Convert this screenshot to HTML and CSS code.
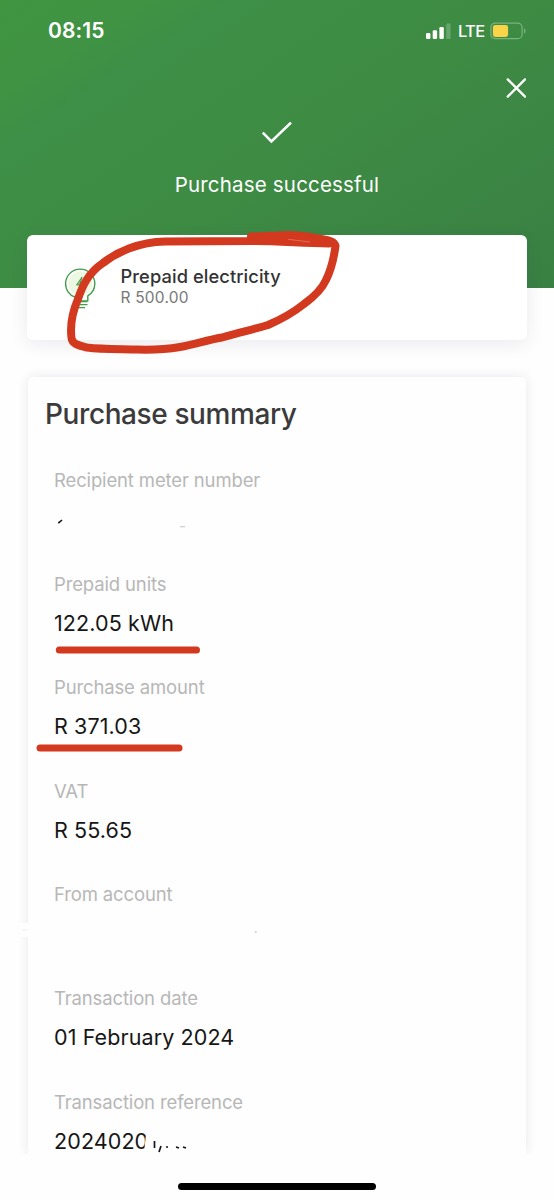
FILE: index.html
```html
<!DOCTYPE html>
<html lang="en">
<head>
<meta charset="utf-8">
<title>Purchase successful</title>
<link rel="stylesheet" href="styles.css">
</head>
<body>
<main class="screen">
  <header class="hero">
    <div class="status">
      <span class="time">08:15</span>
      <div class="indicators">
        <svg class="signal" width="25" height="16" viewBox="0 0 25 16">
          <g fill="#fff"><rect x="0" y="10" width="4.400" height="6" rx="1.200"/><rect x="6.700" y="7.300" width="4.400" height="8.700" rx="1.200"/><rect x="13.400" y="4" width="4.400" height="12" rx="1.200"/></g>
          <rect x="20.200" y="0.500" width="4.400" height="15.500" rx="1.200" fill="#64a66c"/>
        </svg>
        <span class="network">LTE</span>
        <svg class="battery" width="37" height="18" viewBox="0 0 37 18">
          <rect x="0.900" y="1.100" width="31.200" height="15.600" rx="4.300" fill="none" stroke="#79b37e" stroke-width="1.200"/>
          <rect x="2.900" y="3" width="15.200" height="11.900" rx="2.400" fill="#fad448"/>
          <path d="M34 6.200q1.500.7 1.500 2.700t-1.500 2.700z" fill="#79b37e"/>
        </svg>
      </div>
    </div>
    <div class="close-row">
      <svg width="20" height="20" viewBox="0 0 20 20"><path d="M1.700 1.400 19 18.600M19 1.400 1.700 18.600" stroke="#fff" stroke-width="2.300" stroke-linecap="round"/></svg>
    </div>
    <div class="success">
      <svg width="32" height="24" viewBox="0 0 32 24"><path d="M1.800 11.700 10.400 20.400 30 1.600" fill="none" stroke="#fff" stroke-width="2.600"/></svg>
      <h1 class="success-title">Purchase successful</h1>
    </div>
  </header>

  <section class="product">
    <svg class="bulb" width="32" height="42" viewBox="0 0 32 42">
      <circle cx="15.300" cy="15.500" r="12" fill="#edf8e3"/>
      <path d="M10 29C4 27 .6 21.500.6 15.700A14.600 14.600 0 0 1 29.800 15.700c0 5.200-2.300 9.200-7 12.200v5H10z" fill="none" stroke="#409d48" stroke-width="1.400"/>
      <path d="M17 9 11.500 17h5l-2 7 5.500-8h-5z" fill="#8bc78c" stroke="#409d48" stroke-width="1"/>
      <path d="M10 33.700h12.500M11 36.600h11.500M13 39.600h7" stroke="#409d48" stroke-width="1.300"/>
    </svg>
    <div class="product-text">
      <span class="product-name">Prepaid electricity</span>
      <span class="product-price">R 500.00</span>
    </div>
  </section>

  <section class="summary">
    <h2 class="summary-title">Purchase summary</h2>
    <dl class="fields">
      <div class="field"><dt>Recipient meter number</dt><dd>
        <svg width="140" height="26" viewBox="0 0 140 26"><path d="M4.300 17.200 8 14" stroke="#111" stroke-width="1.600"/><path d="M126 20.700h5" stroke="#ccc" stroke-width="1.200"/></svg></dd></div>
      <div class="field"><dt>Prepaid units</dt><dd>122.05 kWh</dd></div>
      <div class="field"><dt>Purchase amount</dt><dd>R 371.03</dd></div>
      <div class="field"><dt>VAT</dt><dd>R 55.65</dd></div>
      <div class="field"><dt>From account</dt><dd>
        <svg width="210" height="24" viewBox="0 0 210 24"><circle cx="201.800" cy="12" r="1" fill="#ccc"/></svg></dd></div>
      <div class="field"><dt>Transaction date</dt><dd>01 February 2024</dd></div>
      <div class="field"><dt>Transaction reference</dt><dd>2024020</dd></div>
    </dl>
  </section>

  <footer class="bottom"><div class="home"></div></footer>

  <svg class="markup" width="554" height="1200" viewBox="0 0 554 1200">
    <g fill="none" stroke="#d2391f" stroke-linecap="round" stroke-linejoin="round">
      <path stroke-width="8" d="M329 243.500C300 243 280 241 253 241L165 241.500C139 242 117 252 103 263C88 273 82 287 78 299C72 313 70 326 71.500 338C72 344 79 345.500 87 347.500C102 349.500 121 349 137 349.500C152 350 165 349.500 180 347C196 344 207 340 222 337.500C240 332 252 330 268 325C282 319 294 312 304 304C315 296 322 289 326 280C331 270 334 257 335.500 246C334 240 325 240 318 238.500C304 235.500 289 234.500 278 235.500L251 236.500"/>
      <path stroke-width="7" d="M255 239 295 237.500 322 241"/>
      <path stroke-width="7" d="M59.300 650H196.500M40 748H179"/>
    </g>
    <path d="M288 239.300 310 242" stroke="#eb7d66" stroke-width=".7"/>
    <path d="M146 1134 144.500 1148h6v-14z" fill="#fefefe"/>
    <g fill="none" stroke="#151515" stroke-width="1.700">
      <path d="M154.500 1141v7M161 1146l-2 6"/><path d="M166 1147h2M176 1147l3 1M183 1147l3 1"/>
    </g>
    <path d="M20 923h9v14h-9z" fill="#fefefe"/>
    <path d="M22 930h5" stroke="#f0f0f4"/>
  </svg>
</main>
</body>
</html>
```
FILE: styles.css
```css
* { box-sizing: border-box; }
body, h1, h2, dl, dd { margin: 0; }
body { background: #fefefe; font-family: Inter, "Liberation Sans", sans-serif; color: #161616; }
svg { display: block; flex: none; }
.screen { position: relative; width: 554px; height: 1200px; overflow: hidden; display: flex; flex-direction: column; background: #fefefe; white-space: nowrap; }

.hero { height: 288px; flex: none; color: #fff; background: linear-gradient(147deg, #409541 0%, #3f9343 15%, #3e8f47 23%, #3e8c44 50%, #3c8644 75%, #398043 100%); }
.status { display: flex; justify-content: space-between; align-items: center; height: 62px; padding: 0 27px 0 48px; }
.time { padding-bottom: 1px; font-size: 21px; font-weight: 600; letter-spacing: .1px; }
.indicators { display: flex; align-items: center; }
.network { margin-left: 7px; width: 25px; font-size: 16.500px; font-weight: 500; letter-spacing: -.7px; }
.battery { margin-left: 7px; }
.close-row { display: flex; justify-content: flex-end; padding: 16px 28px 0 0; height: 59px; }
.success { display: flex; flex-direction: column; align-items: center; gap: 27px; }
.success-title { font-size: 20.500px; line-height: 26px; font-weight: 400; letter-spacing: .18px; }

.product { display: flex; height: 105px; margin: -53px 27px 0; padding: 33px 38px 0; flex: none; border-radius: 6px; background: #fff; box-shadow: 0 4px 18px rgba(40, 40, 90, .09); }
.product-text { display: flex; flex-direction: column; margin-top: -2px; margin-left: 23.500px; }
.product-name { font-size: 18.300px; line-height: 20px; font-weight: 500; letter-spacing: .08px; color: #333; }
.product-price { margin-top: 1px; font-size: 15.500px; line-height: 21px; letter-spacing: .2px; color: #777; }

.summary { height: 777px; margin: 37px 28px 0; padding: 18px 17px 0; flex: none; border-radius: 5px 5px 0 0; background: #fefefe; box-shadow: 0 0 12px rgba(40, 40, 90, .10); }
.summary-title { font-size: 28px; line-height: 38px; font-weight: 500; color: #3b3b3b; letter-spacing: -.4px; }
.fields { padding: 34px 9px 0; }
.field { height: 103.600px; }
dt { font-size: 18.500px; line-height: 26px; letter-spacing: -.14px; color: #b7b7b7; }
dd { height: 26px; margin-top: 13px; font-size: 21.500px; line-height: 26px; letter-spacing: .1px; color: #161616; }

.bottom { position: relative; flex: 1; padding-top: 28.500px; background: #fefefe; }
.home { width: 198px; height: 7px; margin: 0 auto; border-radius: 4px; background: #000; }
.markup { position: absolute; left: 0; top: 0; }
```
